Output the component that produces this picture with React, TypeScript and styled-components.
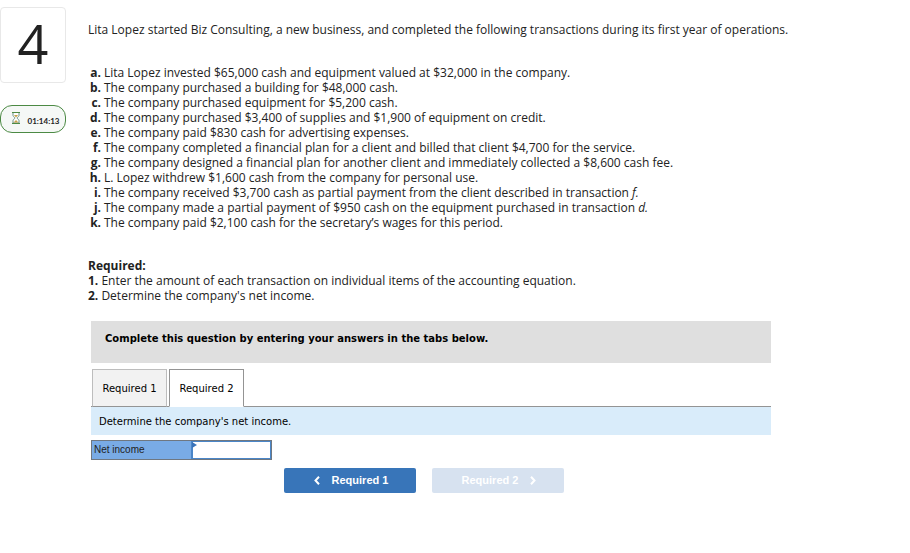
import React from "react";
import styled, { createGlobalStyle } from "styled-components";

const GlobalStyle = createGlobalStyle`
  * { box-sizing: border-box; }
  body {
    margin: 0;
    background: #fff;
    color: #222;
    font: 12px/15px "Open Sans", "Noto Sans", sans-serif;
  }
  p, ol { margin: 0; padding: 0; }
`;

const Page = styled.div`
  display: grid;
  grid-template-columns: 66px minmax(0, 1fr);
  column-gap: 22px;
  padding-top: 7px;
`;

const Sidebar = styled.aside`
  display: flex;
  flex-direction: column;
  gap: 22px;
`;

const QuestionNumber = styled.div`
  display: flex;
  align-items: center;
  justify-content: center;
  height: 76px;
  padding-bottom: 4px;
  border: 1px solid #e8e8e8;
  border-radius: 4px;
  font-size: 54px;
  line-height: 70px;
`;

const Timer = styled.div`
  display: flex;
  align-items: center;
  justify-content: center;
  gap: 6px;
  height: 28px;
  padding-left: 3px;
  border: 1px solid #4c8a44;
  border-radius: 12px;
  background: #f5f8f6;
  font: 700 8px/12px Lato, sans-serif;
`;

const TimerIcon = styled.svg`
  width: 12px;
  height: 16px;
  margin-bottom: 2px;
`;

const TimerValue = styled.span`
  padding-top: 3px;
`;

const Main = styled.main`
  max-width: 780px;
  padding: 15px 16px 24px 0;
`;

const Transactions = styled.ol`
  margin: 28px 0;
  list-style: none;
`;

const Transaction = styled.li`
  display: grid;
  grid-template-columns: 13px minmax(0, 1fr);
  column-gap: 3px;
`;

const Letter = styled.b`
  justify-self: end;
`;

const Answer = styled.section`
  max-width: 683px;
  margin-top: 18px;
  padding-left: 3px;
  color: #000;
  font: 10px/14px "DejaVu Sans", sans-serif;
`;

const Banner = styled.div`
  padding: 11px 14px 17px;
  background: #dfdfdf;
  font-weight: 700;
`;

const Tabs = styled.div`
  display: flex;
  gap: 2px;
  margin-top: 6px;
  padding-left: 1px;
  border-bottom: 1px solid #949494;
`;

const Tab = styled.button<{ $active?: boolean }>`
  min-width: 75px;
  height: 38px;
  margin-bottom: -1px;
  padding: 2px 9px 0;
  border: 1px solid ${(p) => (p.$active ? "#949494" : "#bdbdbd")};
  border-bottom-color: ${(p) => (p.$active ? "#fff" : "#949494")};
  background: ${(p) => (p.$active ? "#fff" : "#f2f2f2")};
  color: #000;
  font: inherit;
`;

const Prompt = styled.p`
  padding: 8px 8px 6px;
  background: #d9ecfa;
`;

const EntryTable = styled.table`
  margin-top: 5px;
  border: 1px solid #6f7780;
  border-spacing: 0;
`;

const EntryLabel = styled.th`
  width: 99px;
  height: 18px;
  padding: 0 2px;
  background: #79abe5;
  color: #222;
  font: 10px/14px "Liberation Sans", sans-serif;
  text-align: left;
`;

const EntryCell = styled.td`
  position: relative;
  width: 80px;
  padding: 0;
`;

const EntryInput = styled.input`
  display: block;
  width: 100%;
  height: 18px;
  padding: 0 4px;
  border: 1px solid #4a86c8;
  border-left-width: 2px;
  background: #fff;
  font: inherit;
  text-align: right;
  outline: none;
`;

const CellMarker = styled.span`
  position: absolute;
  top: 1px;
  left: 1px;
  border: solid transparent;
  border-width: 3px 0 3px 5px;
  border-left-color: #3973b9;
`;

const Pager = styled.nav`
  display: flex;
  justify-content: center;
  gap: 16px;
  margin-top: 8px;
  padding-right: 14px;
`;

const PagerButton = styled.button`
  display: flex;
  align-items: center;
  justify-content: center;
  gap: 12px;
  width: 132px;
  height: 25px;
  padding: 0 0 1px 2px;
  border: 0;
  border-radius: 2px;
  background: #3875b9;
  color: #fff;
  font: 700 11px/14px "Liberation Sans", sans-serif;

  &:disabled { background: #d7e2f0; }
`;

const Chevron = styled.svg`
  width: 6px;
  height: 9px;
  fill: none;
  stroke: currentColor;
  stroke-width: 2;
`;

const transactions: [string, React.ReactNode][] = [
  ["a", "Lita Lopez invested $65,000 cash and equipment valued at $32,000 in the company."],
  ["b", "The company purchased a building for $48,000 cash."],
  ["c", "The company purchased equipment for $5,200 cash."],
  ["d", "The company purchased $3,400 of supplies and $1,900 of equipment on credit."],
  ["e", "The company paid $830 cash for advertising expenses."],
  ["f", "The company completed a financial plan for a client and billed that client $4,700 for the service."],
  ["g", "The company designed a financial plan for another client and immediately collected a $8,600 cash fee."],
  ["h", "L. Lopez withdrew $1,600 cash from the company for personal use."],
  ["i", <>The company received $3,700 cash as partial payment from the client described in transaction <i>f.</i></>],
  ["j", <>The company made a partial payment of $950 cash on the equipment purchased in transaction <i>d.</i></>],
  ["k", "The company paid $2,100 cash for the secretary’s wages for this period."],
];

export default function App() {
  return (
    <>
      <GlobalStyle />
      <Page>
        <Sidebar>
          <QuestionNumber>4</QuestionNumber>
          <Timer>
            <TimerIcon viewBox="0 0 12 16" fill="none" aria-hidden="true">
              <path d="M3 3v2.5c0 1 2 1.8 2 2.5s-2 1.5-2 2.5V13h6v-2.5c0-1-2-1.8-2-2.5s2-1.5 2-2.5V3" fill="#fff" stroke="#6f9488" />
              <path d="M4 5h4L6 7.5zM3.5 12.5L6 10l2.500 2.5z" fill="#c9a24a" />
              <path d="M2 2.500h8M2 13.500h8" stroke="#4c8a44" />
            </TimerIcon>
            <TimerValue>01:14:13</TimerValue>
          </Timer>
        </Sidebar>
        <Main>
          <p>
            Lita Lopez started Biz Consulting, a new business, and completed the following transactions during its
            first year of operations.
          </p>
          <Transactions>
            {transactions.map(([letter, text]) => (
              <Transaction key={letter}>
                <Letter>{letter}.</Letter>
                <span>{text}</span>
              </Transaction>
            ))}
          </Transactions>
          <p><b>Required:</b></p>
          <p><b>1.</b> Enter the amount of each transaction on individual items of the accounting equation.</p>
          <p><b>2.</b> Determine the company's net income.</p>
          <Answer>
            <Banner>Complete this question by entering your answers in the tabs below.</Banner>
            <Tabs role="tablist">
              <Tab type="button" role="tab" aria-selected={false}>Required 1</Tab>
              <Tab type="button" role="tab" aria-selected $active>Required 2</Tab>
            </Tabs>
            <Prompt>Determine the company's net income.</Prompt>
            <EntryTable>
              <tbody>
                <tr>
                  <EntryLabel scope="row"><label htmlFor="net-income">Net income</label></EntryLabel>
                  <EntryCell>
                    <EntryInput id="net-income" type="text" />
                    <CellMarker />
                  </EntryCell>
                </tr>
              </tbody>
            </EntryTable>
            <Pager>
              <PagerButton type="button">
                <Chevron viewBox="0 0 6 9" aria-hidden="true"><path d="M5 .8L1.5 4.5 5 8.2" /></Chevron>
                Required 1
              </PagerButton>
              <PagerButton type="button" disabled>
                Required 2
                <Chevron viewBox="0 0 6 9" aria-hidden="true"><path d="M1 .8l3.5 3.700L1 8.2" /></Chevron>
              </PagerButton>
            </Pager>
          </Answer>
        </Main>
      </Page>
    </>
  );
}
